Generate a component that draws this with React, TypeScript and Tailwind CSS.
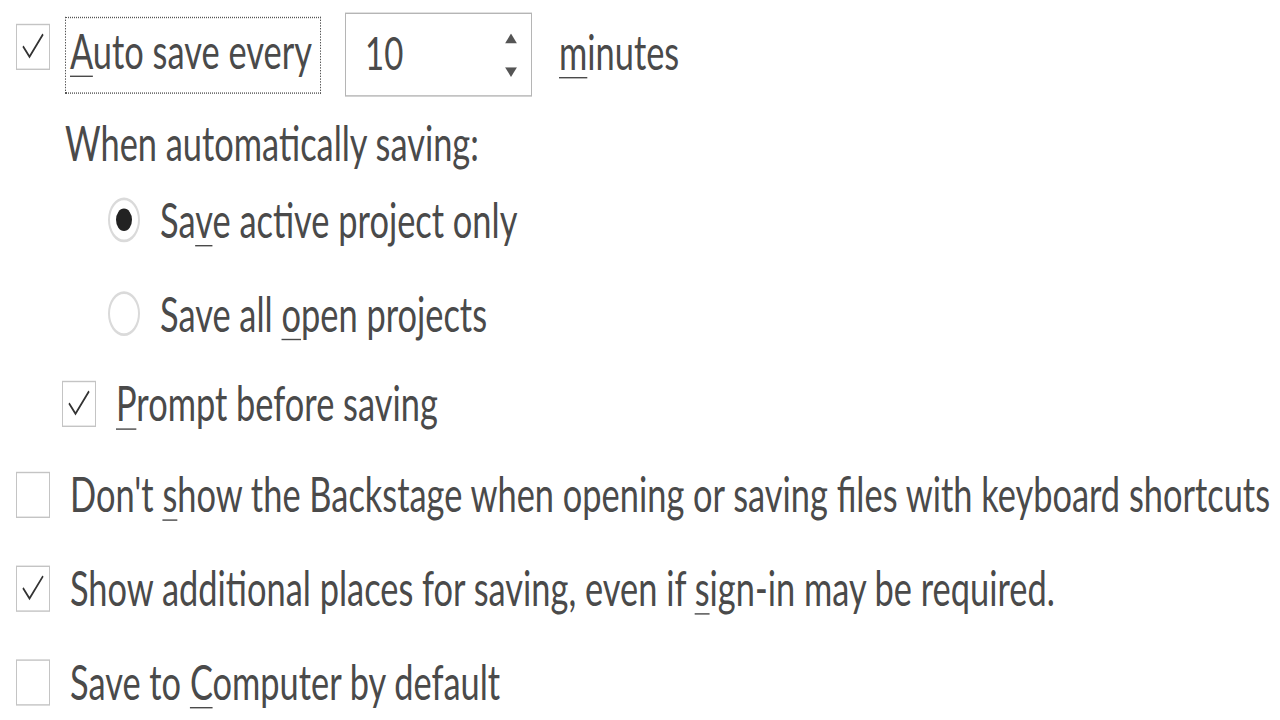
import React from "react";

function Box({ checked }: { checked?: boolean }) {
  return (
    <div className="flex h-[33px] w-[34px] shrink-0 items-center justify-center border border-[#c4c4c4] bg-white">
      {checked && (
        <svg width="26" height="22" viewBox="0 0 26 22" fill="none">
          <path d="M3 11 L9.5 18.5 L23 2.5" stroke="#333" strokeWidth="1.6" />
        </svg>
      )}
    </div>
  );
}

function Radio({ on }: { on?: boolean }) {
  return (
    <div className="flex h-[32px] w-[32px] shrink-0 items-center justify-center rounded-full border-2 border-[#dadada] bg-white">
      {on && <div className="h-[16px] w-[16px] rounded-full bg-[#222]" />}
    </div>
  );
}

function U({ children }: { children: React.ReactNode }) {
  return <span className="underline decoration-1 underline-offset-[5px]">{children}</span>;
}

export default function App() {
  return (
    <div className="h-[720px] w-[1280px] overflow-hidden bg-white">
      <div
        className="origin-top-left scale-y-[1.4] text-[34.4px] leading-none text-[#4a4a4a]"
        style={{ fontFamily: "Lato, 'Liberation Sans', sans-serif" }}
      >
        <div className="flex flex-col pt-[9px]">
          {/* Auto save row */}
          <div className="flex h-[60px] items-center">
            <div className="ml-[16px] -mt-[12px]">
              <Box checked />
            </div>
            <div className="ml-[15px] flex h-[55px] w-[256px] items-center border border-dotted border-[#555] pb-[5px] pl-[4px]">
              <span>
                <U>A</U>uto save every
              </span>
            </div>
            <div className="ml-[24px] flex h-[60px] w-[187px] items-center justify-between border border-[#b5b5b5] pl-[19px] pr-[14px]">
              <span className="pb-[4px] text-[33px]">10</span>
              <div className="flex flex-col items-center gap-[17px]">
                <svg width="12" height="7" viewBox="0 0 12 7"><path d="M6 0 L12 7 L0 7 Z" fill="#555" /></svg>
                <svg width="12" height="7" viewBox="0 0 12 7"><path d="M0 0 L12 0 L6 7 Z" fill="#555" /></svg>
              </div>
            </div>
            <div className="ml-[27px] pb-[4px]">
              <U>m</U>inutes
            </div>
          </div>

          <div className="mt-[13px] flex h-[40px] items-center pl-[65px]">When automatically saving:</div>

          <div className="mt-[15px] flex h-[40px] items-center gap-[20px] pl-[108px]">
            <Radio on />
            <span>Sa<U>v</U>e active project only</span>
          </div>

          <div className="mt-[27px] flex h-[40px] items-center gap-[20px] pl-[108px]">
            <Radio />
            <span>Save all <U>o</U>pen projects</span>
          </div>

          <div className="mt-[24px] flex h-[40px] items-center gap-[20px] pl-[62px]">
            <Box checked />
            <span><U>P</U>rompt before saving</span>
          </div>

          <div className="mt-[25px] flex h-[40px] items-center gap-[20px] pl-[16px]">
            <Box />
            <span className="whitespace-nowrap">Don't <U>s</U>how the Backstage when opening or saving files with keyboard shortcuts</span>
          </div>

          <div className="mt-[27px] flex h-[40px] items-center gap-[20px] pl-[16px]">
            <Box checked />
            <span className="whitespace-nowrap">Show additional places for saving, even if <U>s</U>ign-in may be required.</span>
          </div>

          <div className="mt-[27px] flex h-[40px] items-center gap-[20px] pl-[16px]">
            <Box />
            <span>Save to <U>C</U>omputer by default</span>
          </div>
        </div>
      </div>
    </div>
  );
}
